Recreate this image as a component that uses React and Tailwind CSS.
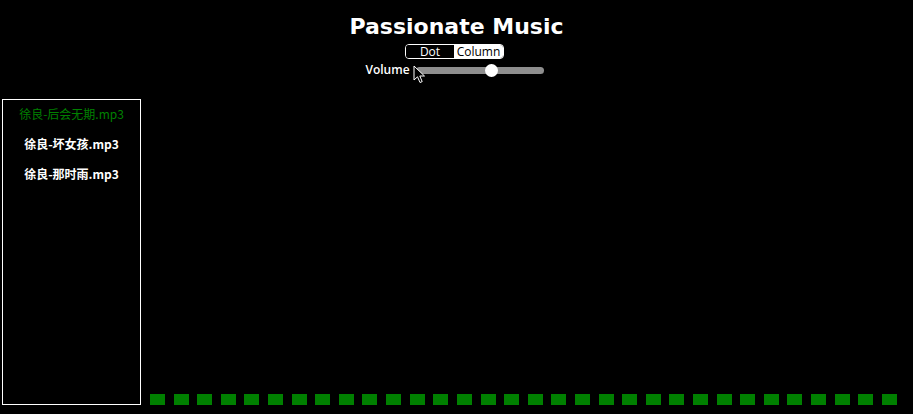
import React, { useState } from 'react';

const songs = ['徐良-后会无期.mp3', '徐良-坏女孩.mp3', '徐良-那时雨.mp3'];
const bars = Array.from({ length: 32 }, (_, i) => i);

const Cursor = () => (
  <svg className="absolute left-[413px] top-[65px]" width="13" height="20" viewBox="0 0 13 20">
    <path d="M1 1 L1 15 L4.5 11.8 L7 17.5 L9.2 16.6 L6.8 11 L11.5 11 Z" fill="#000" stroke="#fff" strokeWidth="1" strokeLinejoin="round" />
  </svg>
);

const App = () => {
  const [mode, setMode] = useState('dot');
  const [current, setCurrent] = useState(0);

  return (
    <div className="relative h-[414px] w-full overflow-hidden bg-black text-white font-['DejaVu_Sans','Noto_Sans_CJK_SC',sans-serif]">
      <div className="flex flex-col items-center pt-[13px]">
        <h1 className="text-[22px] leading-[28px] font-bold">Passionate Music</h1>
        <div className="mt-[3px] mr-[4px] flex h-[15px] w-[99px] overflow-hidden rounded-[4px] border border-white font-['Open_Sans',sans-serif] text-[12px] leading-[13px] font-medium">
          <button
            onClick={() => setMode('dot')}
            className="w-[48px] bg-black text-white"
          >
            Dot
          </button>
          <button
            onClick={() => setMode('column')}
            className="flex-1 bg-white text-black"
          >
            Column
          </button>
        </div>
        <div className="mt-[4px] mr-[4px] flex items-center gap-[6px]">
          <span className="font-['Open_Sans',sans-serif] text-[12px] leading-[14px] font-semibold">Volume</span>
          <div className="relative h-[7px] w-[128px] rounded-full bg-[#8e8e8e]">
            <div className="absolute left-[69px] top-[-3px] h-[13px] w-[13px] rounded-full bg-white" />
          </div>
        </div>
      </div>

      <div className="mt-[22px] flex items-end">
        <ul className="ml-[2px] flex h-[306px] w-[139px] flex-col items-center border border-white pt-[6px] font-['Noto_Sans_CJK_SC','DejaVu_Sans',sans-serif] text-[12px] leading-[16px]">
          {songs.map((song, i) => (
            <li
              key={song}
              onClick={() => setCurrent(i)}
              className={`mb-[14px] cursor-pointer ${i === current ? 'text-[#008000]' : 'font-bold text-white'}`}
            >
              {song}
            </li>
          ))}
        </ul>
        <div className="ml-[9px] flex w-[747px] justify-between">
          {bars.map((b) => (
            <div key={b} className="h-[11px] w-[15px] bg-[#008000]" />
          ))}
        </div>
      </div>

      <Cursor />
    </div>
  );
};

export default App;
